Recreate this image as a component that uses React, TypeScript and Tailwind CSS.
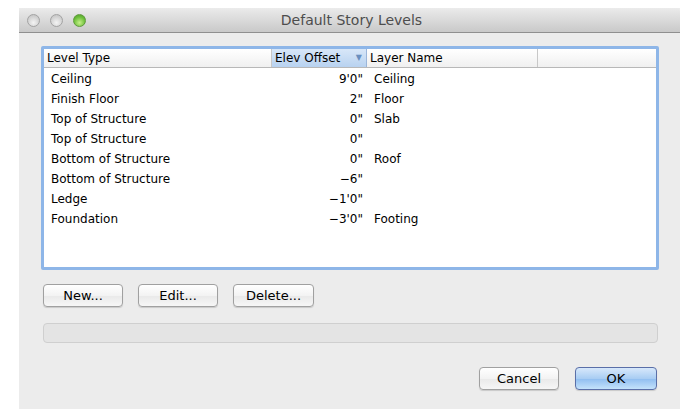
import React from 'react';

interface Level {
  type: string;
  offset: string;
  layer: string;
}

const levels: Level[] = [
  { type: 'Ceiling', offset: '9\'0"', layer: 'Ceiling' },
  { type: 'Finish Floor', offset: '2"', layer: 'Floor' },
  { type: 'Top of Structure', offset: '0"', layer: 'Slab' },
  { type: 'Top of Structure', offset: '0"', layer: '' },
  { type: 'Bottom of Structure', offset: '0"', layer: 'Roof' },
  { type: 'Bottom of Structure', offset: '\u22126"', layer: '' },
  { type: 'Ledge', offset: '\u22121\'0"', layer: '' },
  { type: 'Foundation', offset: '\u22123\'0"', layer: 'Footing' },
];

const TrafficLight: React.FC<{ green?: boolean }> = ({ green }) => (
  <div
    className={
      green
        ? 'w-[13px] h-[13px] rounded-full border border-[#5f9a3c] bg-[radial-gradient(circle_at_50%_70%,#c6f08a,#6cbf3a_60%,#4f9a2a)]'
        : 'w-[13px] h-[13px] rounded-full border border-[#a3a3a3] bg-[radial-gradient(circle_at_50%_70%,#f4f4f4,#d2d2d2_60%,#bdbdbd)]'
    }
  />
);

const PushButton: React.FC<{ label: string; primary?: boolean; className?: string }> = ({ label, primary, className }) => (
  <button
    className={
      (primary
        ? 'border-[#5a6fa8] bg-[linear-gradient(#d7e8fb,#a9cdf3_50%,#8fbdf0_51%,#c4e2fb)] '
        : 'border-[#a0a0a0] bg-[linear-gradient(#ffffff,#f3f3f3_50%,#e9e9e9_51%,#f6f6f6)] ') +
      'h-[23px] rounded-[4px] border text-[13px] text-black shadow-[0_1px_1px_rgba(0,0,0,0.15)] ' +
      (className ?? '')
    }
  >
    {label}
  </button>
);

const App: React.FC = () => {
  return (
    <div className="w-[685px] h-[409px] bg-white pl-[19px] pt-[8px] pr-[5px] font-['DejaVu_Sans',sans-serif]">
      <div className="h-full flex flex-col bg-[#ececec]">
        {/* title bar */}
        <div className="h-[25px] flex items-center border-b border-[#8f8f8f] bg-[linear-gradient(#ebebeb,#c9c9c9)] rounded-t-[4px] relative">
          <div className="flex gap-[10px] pl-[8px]">
            <TrafficLight />
            <TrafficLight />
            <TrafficLight green />
          </div>
          <div className="absolute inset-0 flex items-center justify-center text-[14px] text-[#4d4d4d] pl-[4px]">
            Default Story Levels
          </div>
        </div>

        <div className="flex flex-col px-[22px] pt-[13px]">
          {/* levels table */}
          <div className="w-[618px] h-[224px] border-[3px] border-[#8eb6e8] rounded-[2px] bg-white">
            <div className="h-[19px] flex border-b border-[#b8b8b8] bg-[linear-gradient(#ffffff,#f0f0f0)] text-[12px] text-black">
              <div className="w-[228px] pl-[3px] flex items-center border-r border-[#c8c8c8]">Level Type</div>
              <div className="w-[95px] pl-[3px] pr-[4px] flex items-center justify-between border-r border-[#9bb6da] bg-[linear-gradient(#d8e7f8,#b8d2f0)]">
                <span>Elev Offset</span>
                <span className="text-[8px] text-[#6a8fbf]">▼</span>
              </div>
              <div className="w-[171px] pl-[3px] flex items-center border-r border-[#c8c8c8]">Layer Name</div>
              <div className="flex-1" />
            </div>
            <div className="pt-[1px]">
              {levels.map((lv, i) => (
                <div key={i} className="h-[20px] flex items-center text-[12px] text-black">
                  <div className="w-[228px] pl-[7px]">{lv.type}</div>
                  <div className="w-[95px] text-right pr-[4px]">{lv.offset}</div>
                  <div className="pl-[7px]">{lv.layer}</div>
                </div>
              ))}
            </div>
          </div>

          {/* edit buttons */}
          <div className="flex gap-[15px] pt-[14px] pl-[2px]">
            <PushButton label="New..." className="w-[80px]" />
            <PushButton label="Edit..." className="w-[80px]" />
            <PushButton label="Delete..." className="w-[81px]" />
          </div>

          {/* status bar */}
          <div className="mt-[16px] ml-[2px] w-[615px] h-[20px] rounded-[4px] border border-[#cfcfcf] bg-[#e4e4e4]" />

          {/* dialog buttons */}
          <div className="flex justify-end gap-[16px] pt-[24px] pr-[1px]">
            <PushButton label="Cancel" className="w-[80px]" />
            <PushButton label="OK" primary className="w-[82px]" />
          </div>
        </div>
      </div>
    </div>
  );
};

export default App;
